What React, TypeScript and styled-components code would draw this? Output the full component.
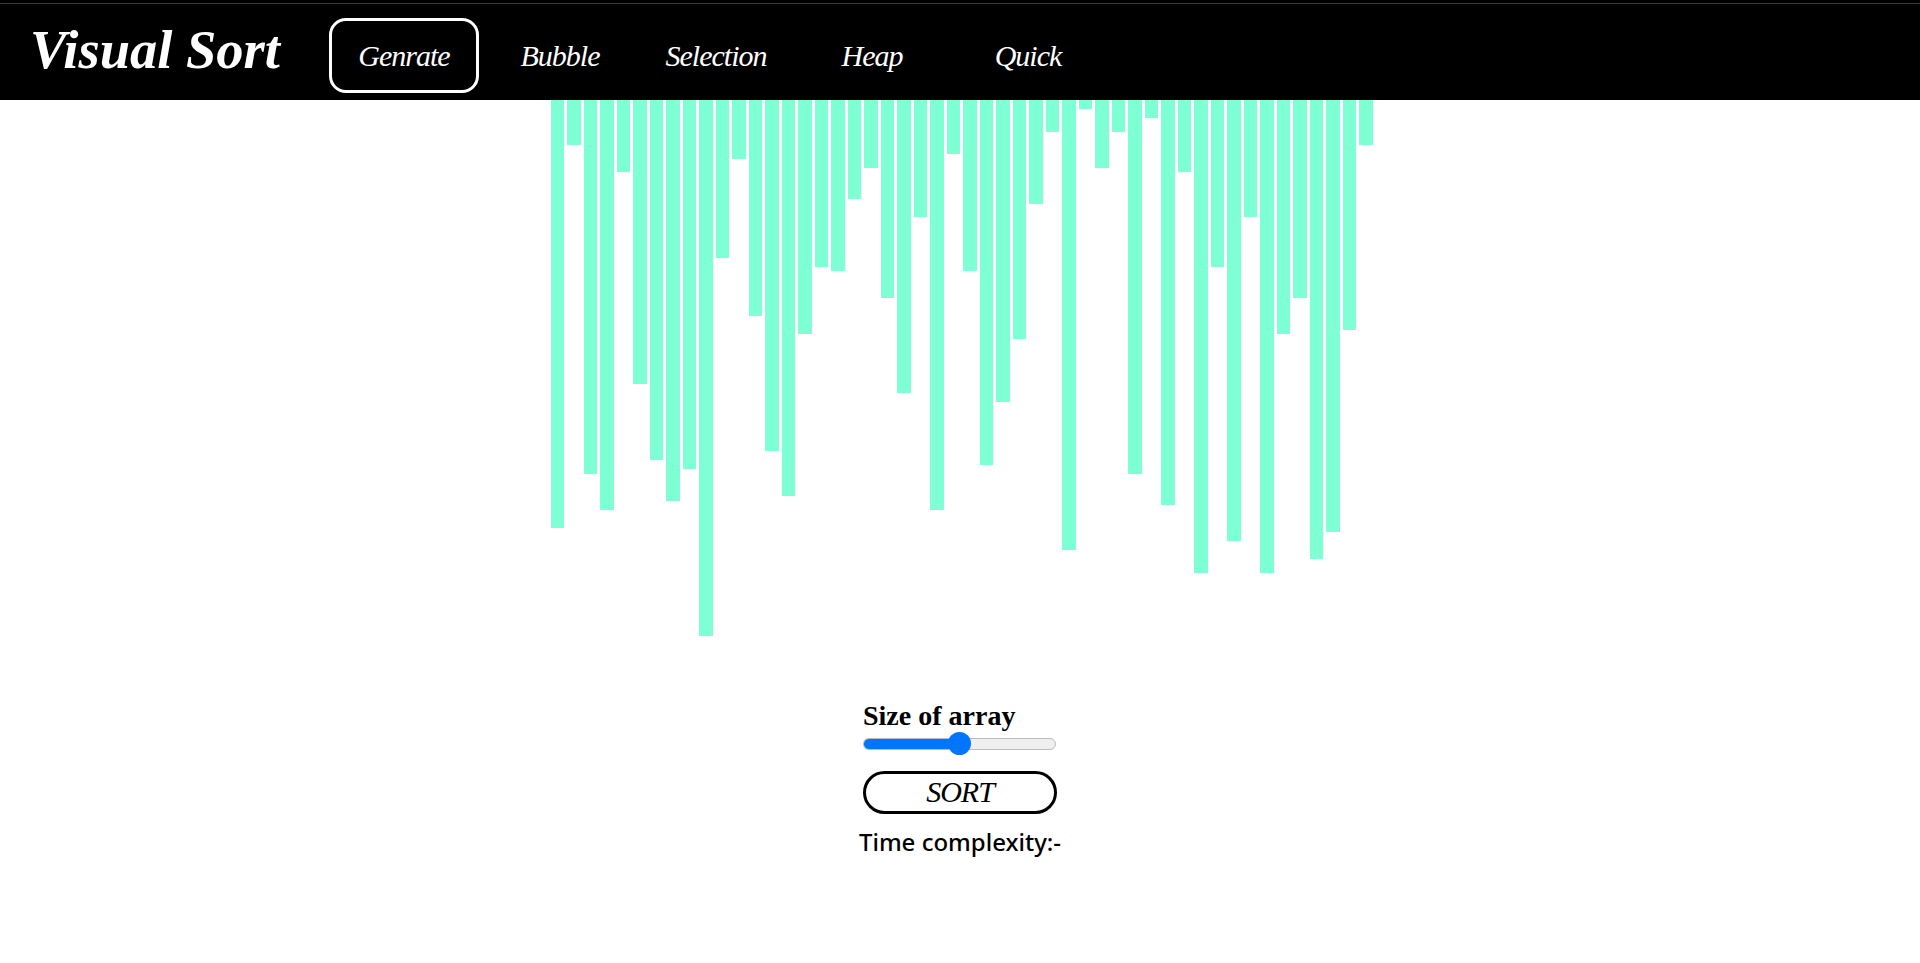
import React from "react";
import styled, { createGlobalStyle } from "styled-components";

const Global = createGlobalStyle`
  html, body { margin: 0; padding: 0; background: #fff; }
  body { font-family: "Liberation Serif", serif; }
`;

const Nav = styled.nav`
  height: 100px;
  box-sizing: border-box;
  background: #000;
  display: flex;
  align-items: center;
  padding: 14px 0 0 30px;
  box-shadow: inset 0 3px 0 #000, inset 0 4px 0 #3a3a3a;
`;

const Brand = styled.div`
  width: 299px;
  margin-top: -16px;
  color: #fff;
  font: italic 700 54.5px "Liberation Serif", serif;
  white-space: nowrap;
`;

const NavItem = styled.button<{ $active?: boolean }>`
  width: 150px;
  height: 75px;
  margin-right: 6px;
  box-sizing: border-box;
  background: transparent;
  color: #fff;
  border: 3px solid ${(p) => (p.$active ? "#fff" : "transparent")};
  border-radius: 17px;
  font: italic 400 30px "Liberation Serif", serif;
  letter-spacing: -1px;
  padding: 2px 0 0;
  position: relative;
  top: -2px;
`;

const BarRow = styled.div`
  display: flex;
  justify-content: center;
  align-items: flex-start;
  padding-left: 3.8px;
  height: 535.5px;
`;

const Bar = styled.div`
  width: 13.5px;
  margin: 0 1.5px;
  flex: none;
  background: aquamarine;
`;

const Controls = styled.div`
  width: 194px;
  margin: 0 auto;
  padding: 65px 0 0 0;
  display: flex;
  flex-direction: column;
  align-items: stretch;
`;

const Label = styled.label`
  font: 700 28px/30px "Liberation Serif", serif;
  color: #000;
  white-space: nowrap;
`;

const Slider = styled.input`
  -webkit-appearance: none;
  appearance: none;
  width: 193px;
  height: 24px;
  margin: 1px 0 0;
  background: transparent;

  &::-webkit-slider-runnable-track {
    height: 12px;
    border-radius: 6px;
    border: 1px solid #bbb;
    box-sizing: border-box;
    background: linear-gradient(to right, #0075ff 50%, #efefef 50%);
  }
  &::-webkit-slider-thumb {
    -webkit-appearance: none;
    width: 23px;
    height: 23px;
    margin-top: -6.5px;
    border-radius: 50%;
    background: #0075ff;
  }
`;

const SortButton = styled.button`
  margin-top: 15px;
  height: 43px;
  box-sizing: border-box;
  background: #fff;
  border: 3px solid #000;
  border-radius: 22px;
  font: italic 400 30px "Liberation Serif", serif;
  letter-spacing: -1px;
  color: #000;
  padding: 0;
`;

const Complexity = styled.div`
  margin: 11px -10px 0 -10px;
  text-align: center;
  font: 500 24px "Noto Sans", sans-serif;
  color: #000;
  white-space: nowrap;
`;

const values = [
  95, 10, 83, 91, 16, 63, 80, 89, 82, 119, 35, 13, 48, 78, 88, 52, 37, 38, 22, 15, 44, 65, 26, 91, 12,
  38, 81, 67, 53, 23, 7, 100, 2, 15, 7, 83, 4, 90, 16, 105, 37, 98, 26, 105, 52, 44, 102, 96, 51, 10,
];

const items = ["Genrate", "Bubble", "Selection", "Heap", "Quick"];

export default function App() {
  return (
    <>
      <Global />
      <Nav>
        <Brand>Visual Sort</Brand>
        {items.map((t, i) => (
          <NavItem key={t} $active={i === 0}>
            {t}
          </NavItem>
        ))}
      </Nav>
      <BarRow>
        {values.map((v, i) => (
          <Bar key={i} style={{ height: v * 4.5 }} />
        ))}
      </BarRow>
      <Controls>
        <Label htmlFor="size">Size of array</Label>
        <Slider id="size" type="range" min={0} max={100} defaultValue={50} />
        <SortButton>SORT</SortButton>
        <Complexity>Time complexity:-</Complexity>
      </Controls>
    </>
  );
}
